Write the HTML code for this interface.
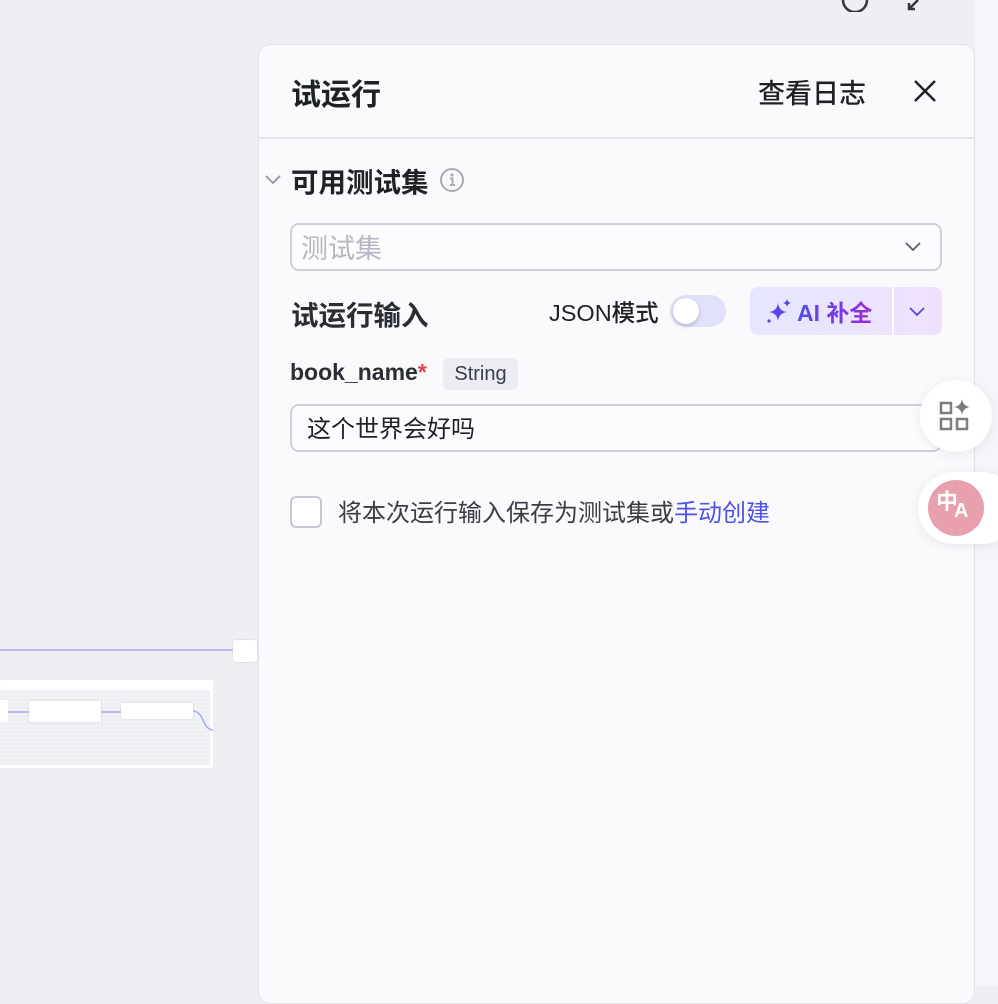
<!DOCTYPE html>
<html><head><meta charset="utf-8"><style>
*{box-sizing:border-box;margin:0;padding:0}
body{width:998px;height:986px;overflow:hidden;background:#eeeef3;font-family:"Liberation Sans","Noto Sans CJK SC",sans-serif;color:#1f2129;position:relative}
.abs{position:absolute;white-space:nowrap}
.strip{left:975px;top:0;width:23px;height:986px;background:#f6f6fa}
.panel{left:258px;top:44px;width:717px;height:960px;background:#fafafd;border:1px solid #e2e2ea;border-radius:12px}
.inp{border:2px solid #cfd0dc;border-radius:9px;background:#fcfcff}
</style></head><body>
<div class="abs strip"></div>
<svg class="abs" style="left:840px;top:0" width="32" height="12"><path d="M3 0 A12 12 0 0 0 27 0" fill="none" stroke="#333640" stroke-width="2.5"/></svg>
<svg class="abs" style="left:905px;top:0" width="20" height="12"><path d="M13 0 L4 9 M4 3 V9 H10" fill="none" stroke="#333640" stroke-width="2.5"/></svg>
<div class="abs" style="left:0;top:649px;width:238px;height:2px;background:#b8b6f6"></div>
<div class="abs" style="left:233px;top:640px;width:24px;height:22px;background:#fff;border-radius:3px;box-shadow:0 0 2px #ccc"></div>
<div class="abs" style="left:0;top:680px;width:213px;height:88px;background:#fff;border-radius:2px"></div>
<div class="abs" style="left:0;top:690px;width:210px;height:75px;background:#f1f2f5;background-image:radial-gradient(#d8d9e0 0.6px,transparent 0.8px);background-size:4px 4px"></div>
<div class="abs" style="left:0;top:700px;width:8px;height:22px;background:#fff"></div>
<div class="abs" style="left:29px;top:701px;width:72px;height:21px;background:#fff;border-radius:2px;box-shadow:0 0 2px #ccc"></div>
<div class="abs" style="left:121px;top:703px;width:72px;height:16px;background:#fff;border-radius:2px;box-shadow:0 0 2px #ccc"></div>
<div class="abs" style="left:8px;top:711px;width:21px;height:2px;background:#b8b6f6"></div>
<div class="abs" style="left:101px;top:711px;width:20px;height:2px;background:#b8b6f6"></div>
<svg class="abs" style="left:193px;top:708px" width="22" height="26"><path d="M0 3 Q6 3 10 12 Q14 22 20 22" fill="none" stroke="#a9a7f3" stroke-width="1.5"/></svg>
<div class="abs panel"></div>
<div class="abs" style="left:291px;top:70px;font-size:30px;font-weight:700">试运行</div>
<div class="abs" style="left:758px;top:72px;font-size:27px;font-weight:500">查看日志</div>
<svg class="abs" style="left:912px;top:78px" width="26" height="26"><path d="M3 3 L23 23 M23 3 L3 23" stroke="#1f2129" stroke-width="2.5"/></svg>
<div class="abs" style="left:259px;top:137px;width:715px;height:2px;background:#e4e4ec"></div>
<svg class="abs" style="left:264px;top:173px" width="18" height="14"><path d="M2 3 L9 10 L16 3" fill="none" stroke="#9a9cab" stroke-width="2"/></svg>
<div class="abs" style="left:291px;top:160px;font-size:27.5px;font-weight:700">可用测试集</div>
<svg class="abs" style="left:439px;top:167px" width="26" height="26"><circle cx="13" cy="13" r="11" fill="none" stroke="#a8aab8" stroke-width="2"/><circle cx="13" cy="8" r="1.6" fill="#a8aab8"/><path d="M11 11.5 H13.5 V18 M11 18 H16" stroke="#a8aab8" stroke-width="2" fill="none"/></svg>
<div class="abs inp" style="left:290px;top:223px;width:652px;height:48px"></div>
<div class="abs" style="left:301px;top:227px;font-size:27px;color:#b5b7c5">测试集</div>
<svg class="abs" style="left:904px;top:240px" width="18" height="14"><path d="M2 3 L9 10 L16 3" fill="none" stroke="#5b5e6b" stroke-width="1.8"/></svg>
<div class="abs" style="left:291px;top:293px;font-size:27.5px;font-weight:700;color:#2b2d36">试运行输入</div>
<div class="abs" style="left:549px;top:294px;font-size:23.5px;font-weight:500">JSON模式</div>
<div class="abs" style="left:670px;top:295px;width:56px;height:32px;background:#e0e1fb;border-radius:16px"></div>
<div class="abs" style="left:673px;top:298px;width:26px;height:26px;background:#fff;border-radius:50%;box-shadow:0 2px 4px rgba(0,0,0,.2)"></div>
<div class="abs" style="left:750px;top:287px;width:192px;height:48px;border-radius:8px;background:linear-gradient(90deg,#e6e7fe,#efe1fd)"></div>
<div class="abs" style="left:892px;top:287px;width:2px;height:48px;background:#fff"></div>
<svg class="abs" style="left:766px;top:298px" width="26" height="26"><path d="M12 5 Q13 13 21 14 Q13 15 12 23 Q11 15 3 14 Q11 13 12 5Z" fill="#5a46e8"/><path d="M21 1 Q21.6 4.4 25 5 Q21.6 5.6 21 9 Q20.4 5.6 17 5 Q20.4 4.4 21 1Z" fill="#5a46e8"/><circle cx="3" cy="23" r="1.6" fill="#5a46e8"/></svg>
<div class="abs" style="left:797px;top:294px;font-size:23px;font-weight:700;background:linear-gradient(90deg,#4f4de8,#9b2be0);-webkit-background-clip:text;color:transparent">AI 补全</div>
<svg class="abs" style="left:908px;top:305px" width="18" height="14"><path d="M2 3 L9 10 L16 3" fill="none" stroke="#5a46e8" stroke-width="1.8"/></svg>
<div class="abs" style="left:290px;top:359px;font-size:23px;font-weight:600;color:#2b2d36">book_name<span style="color:#e0424b">*</span></div>
<div class="abs" style="left:443px;top:358px;width:75px;height:32px;background:#ececf3;border-radius:6px;font-size:20px;color:#3a3c48;text-align:center;line-height:32px">String</div>
<div class="abs inp" style="left:290px;top:404px;width:652px;height:48px"></div>
<div class="abs" style="left:307px;top:409px;font-size:24px;color:#1f2129">这个世界会好吗</div>
<div class="abs" style="left:290px;top:496px;width:32px;height:32px;border:2px solid #c5c7d3;border-radius:6px;background:#fff"></div>
<div class="abs" style="left:338px;top:493px;font-size:24px;color:#3a3c48">将本次运行输入保存为测试集或<span style="color:#4d53e8">手动创建</span></div>
<div class="abs" style="left:920px;top:380px;width:72px;height:72px;background:#fff;border-radius:50%;box-shadow:0 2px 12px rgba(0,0,0,.08)"></div>
<svg class="abs" style="left:938px;top:398px" width="36" height="36"><rect x="3" y="5" width="10" height="10" fill="none" stroke="#7c7c80" stroke-width="2.5"/><rect x="3" y="21" width="10" height="10" fill="none" stroke="#7c7c80" stroke-width="2.5"/><rect x="19" y="21" width="10" height="10" fill="none" stroke="#7c7c80" stroke-width="2.5"/><path d="M24 1 Q25 8 32 9 Q25 10 24 17 Q23 10 16 9 Q23 8 24 1Z" fill="#7c7c80"/></svg>
<div class="abs" style="left:918px;top:472px;width:100px;height:72px;background:#fff;border-radius:36px;box-shadow:0 2px 12px rgba(0,0,0,.08)"></div>
<div class="abs" style="left:928px;top:480px;width:56px;height:56px;background:#e8a0ae;border-radius:50%"></div>
<div class="abs" style="left:936px;top:484px;font-size:22px;font-weight:700;color:#fff">中</div>
<div class="abs" style="left:954px;top:500px;font-size:20px;font-weight:700;color:#fff">A</div>
</body></html>
